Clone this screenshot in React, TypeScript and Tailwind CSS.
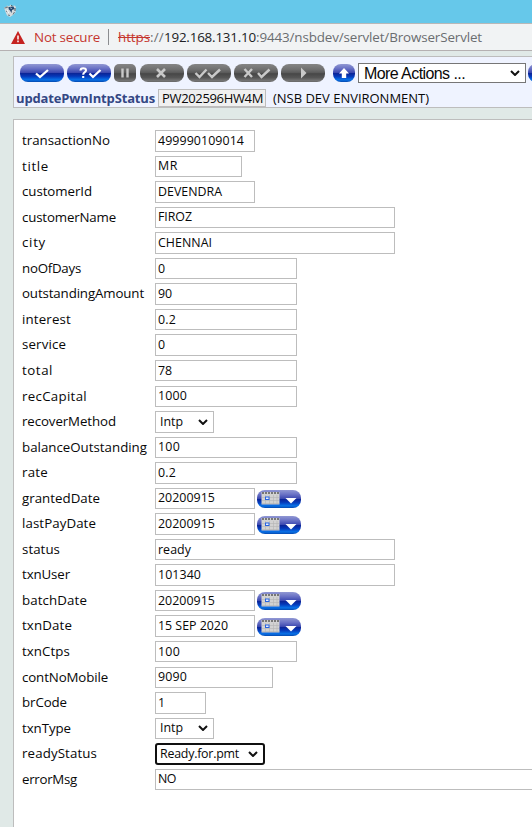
import { useLayoutEffect, useRef, useState } from "react";

type FitProps = { text: string; width: number; className?: string };

/** Single line of text whose tracking is adjusted to fill a given width. */
function Fit({ text, width, className = "" }: FitProps) {
  const ref = useRef<HTMLSpanElement>(null);
  const [spacing, setSpacing] = useState(0);
  useLayoutEffect(() => {
    if (ref.current) {
      const natural = ref.current.getBoundingClientRect().width;
      setSpacing((width - natural) / text.length);
    }
  }, [text, width]);
  return (
    <span ref={ref} className={`inline-block whitespace-pre ${className}`} style={{ letterSpacing: spacing }}>
      {text}
    </span>
  );
}

const BLUE = "bg-[linear-gradient(180deg,#9198d3_0%,#6971c5_25%,#3b48b0_48%,#0b2598_52%,#0538b8_68%,#0872e8_88%,#0648ae_100%)]";
const GRAY = "bg-[linear-gradient(180deg,#858585_0%,#707070_30%,#5b5b5b_48%,#474747_54%,#555555_75%,#777777_94%,#626262_100%)]";

type Glyph = "check" | "validate" | "pause" | "cross" | "double" | "crossCheck" | "play" | "up";

function GlyphShape({ kind }: { kind: Glyph }) {
  const line = { fill: "none", stroke: "currentColor", strokeWidth: 2 };
  switch (kind) {
    case "check":
      return <path d="M16 9.5 20 13 28 6" {...line} strokeWidth={2.3} />;
    case "validate":
      return (
        <>
          <path d="M13.5 6.5C13.5 3.5 19 3.5 19 6.3c0 2-2.8 2-2.8 4.4M16.2 12v2" {...line} strokeWidth={2.1} />
          <path d="M22.5 9.5 26 13 33.5 6" {...line} strokeWidth={2.3} />
        </>
      );
    case "pause":
      return <path d="M8.5 4.5v9M13.5 4.5v9" {...line} strokeWidth={2.4} />;
    case "cross":
      return <path d="m17 5 8 8m0-8-8 8" {...line} strokeWidth={2.6} />;
    case "double":
      return <path d="m8.5 9 4 4 7-7.5M21 9l4 4 8-7.5" {...line} strokeWidth={2.4} />;
    case "crossCheck":
      return <path d="m10.5 5 7.5 8m0-8-7.5 8M24 9l3.5 4 8-7.5" {...line} strokeWidth={2.4} />;
    case "play":
      return <path d="m20 3.5 5.5 5.5-5.5 5.5z" fill="currentColor" />;
    case "up":
      return <path d="m11 4 5 5.5h-2.8V14H8.8V9.5H6z" fill="currentColor" />;
  }
}

function ToolButton({ kind, blue = false, small = false }: { kind: Glyph; blue?: boolean; small?: boolean }) {
  return (
    <button
      className={`h-[18px] shrink-0 overflow-hidden ${small && !blue ? "rounded-[5px]" : "rounded-[8px]"} ${
        small ? "w-[22px]" : "w-11"
      } ${blue ? `${BLUE} text-white` : `${GRAY} text-[#c9c9c9]`}`}
    >
      <svg className="block h-[18px] w-full" viewBox={small ? "0 0 22 18" : "0 0 44 18"}>
        <GlyphShape kind={kind} />
      </svg>
    </button>
  );
}

function Chevron() {
  return (
    <svg className="h-[6px] w-[10px] shrink-0" viewBox="0 0 10 6">
      <path d="M1 1l4 4 4-4" fill="none" stroke="#111" strokeWidth="2" />
    </svg>
  );
}

function CalendarButton() {
  return (
    <button className={`mt-[2.5px] ml-[2px] h-[18px] w-11 shrink-0 overflow-hidden rounded-[8px] ${BLUE}`}>
      <svg className="block" width="44" height="18" viewBox="0 0 44 18">
        <rect x="4.5" y="2" width="18" height="12.5" fill="#d2d2d2" />
        <path d="M5 3h17" stroke="#777" strokeWidth="2" strokeDasharray="2 1" />
        <path d="M5 7.5h17M5 10.5h17M5 13.5h17M8.5 5v9M12.5 5v9M16.5 5v9M20 5v9" stroke="#b4b4b4" strokeWidth=".6" />
        <rect x="8.5" y="7" width="3.5" height="2.5" fill="#e8efff" stroke="#2864e0" />
        <path d="M28.5 8h11L34 13.5z" fill="#fff" />
      </svg>
    </button>
  );
}

type Row = {
  label: string;
  labelWidth: number;
  value: string;
  valueWidth: number;
  box: string;
  kind?: "date" | "select" | "focused";
};

const rows: Row[] = [
  { label: "transactionNo", labelWidth: 88, value: "499990109014", valueWidth: 86, box: "w-[100px]" },
  { label: "title", labelWidth: 27, value: "MR", valueWidth: 20, box: "w-[87px]" },
  { label: "customerId", labelWidth: 70, value: "DEVENDRA", valueWidth: 64, box: "w-[100px]" },
  { label: "customerName", labelWidth: 94, value: "FIROZ", valueWidth: 34, box: "w-[240px]" },
  { label: "city", labelWidth: 24, value: "CHENNAI", valueWidth: 54, box: "w-[240px]" },
  { label: "noOfDays", labelWidth: 59, value: "0", valueWidth: 7, box: "w-[142px]" },
  { label: "outstandingAmount", labelWidth: 122, value: "90", valueWidth: 14, box: "w-[142px]" },
  { label: "interest", labelWidth: 49, value: "0.2", valueWidth: 18, box: "w-[142px]" },
  { label: "service", labelWidth: 44, value: "0", valueWidth: 7, box: "w-[142px]" },
  { label: "total", labelWidth: 31, value: "78", valueWidth: 14, box: "w-[142px]" },
  { label: "recCapital", labelWidth: 65, value: "1000", valueWidth: 29, box: "w-[142px]" },
  { label: "recoverMethod", labelWidth: 94, value: "Intp", valueWidth: 23, box: "w-[59px]", kind: "select" },
  { label: "balanceOutstanding", labelWidth: 125, value: "100", valueWidth: 22, box: "w-[142px]" },
  { label: "rate", labelWidth: 26, value: "0.2", valueWidth: 18, box: "w-[142px]" },
  { label: "grantedDate", labelWidth: 78, value: "20200915", valueWidth: 57, box: "w-[100px]", kind: "date" },
  { label: "lastPayDate", labelWidth: 74, value: "20200915", valueWidth: 57, box: "w-[100px]", kind: "date" },
  { label: "status", labelWidth: 38, value: "ready", valueWidth: 33, box: "w-[240px]" },
  { label: "txnUser", labelWidth: 48, value: "101340", valueWidth: 43, box: "w-[240px]" },
  { label: "batchDate", labelWidth: 65, value: "20200915", valueWidth: 57, box: "w-[100px]", kind: "date" },
  { label: "txnDate", labelWidth: 50, value: "15 SEP 2020", valueWidth: 70, box: "w-[100px]", kind: "date" },
  { label: "txnCtps", labelWidth: 48, value: "100", valueWidth: 22, box: "w-[142px]" },
  { label: "contNoMobile", labelWidth: 86, value: "9090", valueWidth: 29, box: "w-[118px]" },
  { label: "brCode", labelWidth: 45, value: "1", valueWidth: 7, box: "w-[51px]" },
  { label: "txnType", labelWidth: 49, value: "Intp", valueWidth: 23, box: "w-[59px]", kind: "select" },
  { label: "readyStatus", labelWidth: 75, value: "Ready.for.pmt", valueWidth: 79, box: "w-[110px]", kind: "focused" },
  { label: "errorMsg", labelWidth: 55, value: "NO", valueWidth: 18, box: "w-[400px]" },
];

function Field({ row }: { row: Row }) {
  const isSelect = row.kind === "select" || row.kind === "focused";
  const frame =
    row.kind === "focused"
      ? "rounded-[3px] border-2 border-[#101010] pl-[3px] pr-[5px]"
      : isSelect
        ? "border border-[#bdbdbd] pl-1 pr-[5px]"
        : "border border-[#bdbdbd] pl-[2px]";
  return (
    <div className="flex h-[25.55px] shrink-0 items-start">
      <div className="w-[133px] shrink-0 text-[13.3px] leading-[21px]">
        <Fit text={row.label} width={row.labelWidth} />
      </div>
      <div className={`flex h-[21.5px] shrink-0 items-center justify-between bg-white ${frame} ${row.box}`}>
        <Fit text={row.value} width={row.valueWidth} className="text-[12.4px] leading-[18px]" />
        {isSelect && <Chevron />}
      </div>
      {row.kind === "date" && <CalendarButton />}
    </div>
  );
}

export default function App() {
  return (
    <div className="flex h-[827px] w-[532px] flex-col overflow-hidden bg-[#e0e9e7] font-['Open_Sans','Noto_Sans',sans-serif] text-[#080808]">
      <div className="h-[23px] shrink-0 bg-[#66c8ea] pt-[4px] pl-1">
        <svg width="13" height="13" viewBox="0 0 13 13">
          <path d="M0 3.5 2 3 3 1.5 5 2.5 6.5.5 8 2l3-.5 1 2-.5 5L9 11l-3 2-3-1.5L1.5 8z" fill="#d3dadd" />
          <path d="M.5 4 3 3.5M2 7l2 1M4 11l2 .5M10.500 8 9 10.500" stroke="#66757d" fill="none" />
          <path d="m5 3 4.500-.5L10.500 5 8 6 7.500 9 6 6.500 4.500 5z" fill="#24486f" />
          <path d="M3 2.500 4.500 4M7 1.500 8.500 2M11 4v3" stroke="#4b565c" fill="none" />
          <path d="m6.500 4 1 .5M3 6l1.500 3" stroke="#fff" fill="none" />
        </svg>
      </div>
      <div className="flex h-7 shrink-0 items-center border-t border-b border-t-[#b8b8b8] border-b-[#b5b1b2] bg-[#f1f3f4] pl-[11px] text-[13.4px] leading-5">
        <svg className="shrink-0" width="14" height="13" viewBox="0 0 14 13">
          <path d="M7 0 14 13H0z" fill="#c5221f" />
          <path d="M7 4.5v4M7 9.5v1.7" stroke="#fff" strokeWidth="1.5" />
        </svg>
        <Fit text="Not secure" width={66} className="ml-[9px] text-[#c5362f]" />
        <div className="ml-[8px] h-4 w-px bg-[#8b8d90]" />
        <div className="ml-[9px] flex text-[#6a6d70]">
          <Fit text="https" width={32} className="text-[#c5362f] line-through" />
          <Fit text="://" width={14} />
          <Fit text="192.168.131.10" width={92} className="text-[#202124]" />
          <Fit text=":9443/nsbdev/servlet/BrowserServlet" width={226} />
        </div>
      </div>

      <div className="mt-[5px] ml-[13px] h-[52px] w-[560px] shrink-0 border border-[#bdbdbd] bg-[#eff3ff]">
        <div className="flex h-[31px] items-start pt-[7px] pl-[6px]">
          <div className="flex gap-[3px]">
            <ToolButton kind="check" blue />
            <ToolButton kind="validate" blue />
            <ToolButton kind="pause" small />
            <div className="flex gap-[3px] pl-px">
              <ToolButton kind="cross" />
              <ToolButton kind="double" />
              <ToolButton kind="crossCheck" />
              <ToolButton kind="play" />
            </div>
          </div>
          <div className="ml-2 flex">
            <ToolButton kind="up" blue small />
          </div>
          <div className="-mt-px ml-[3px] flex h-5 w-[168px] shrink-0 items-center justify-between border border-[#767676] bg-white pr-[5px] pl-[5px] font-['Liberation_Sans',Arial,sans-serif] text-base leading-[18px]">
            <Fit text="More Actions ..." width={101} className="pt-px" />
            <Chevron />
          </div>
          <div className={`ml-[2px] h-[18px] w-11 shrink-0 rounded-[8px] ${BLUE}`} />
        </div>
        <div className="flex h-[19px] items-center pl-[2px] text-[13px] leading-[18px]">
          <Fit text="updatePwnIntpStatus" width={139} className="pt-px font-bold text-[#344784]" />
          <div className="ml-[3px] flex h-[18px] w-[108px] shrink-0 items-center border border-[#bdbdbd] bg-[#f0f0f0] pl-[3px]">
            <Fit text="PW202596HW4M" width={101} className="pt-px leading-4" />
          </div>
          <Fit text="(NSB DEV ENVIRONMENT)" width={156} className="ml-[7px] pt-px" />
        </div>
      </div>

      <div className="mt-[11px] ml-[13px] flex h-[720px] w-[560px] shrink-0 flex-col border border-[#bdbdbd] bg-white pt-[10.05px] pl-2">
        {rows.map((row) => (
          <Field key={row.label} row={row} />
        ))}
      </div>
    </div>
  );
}
